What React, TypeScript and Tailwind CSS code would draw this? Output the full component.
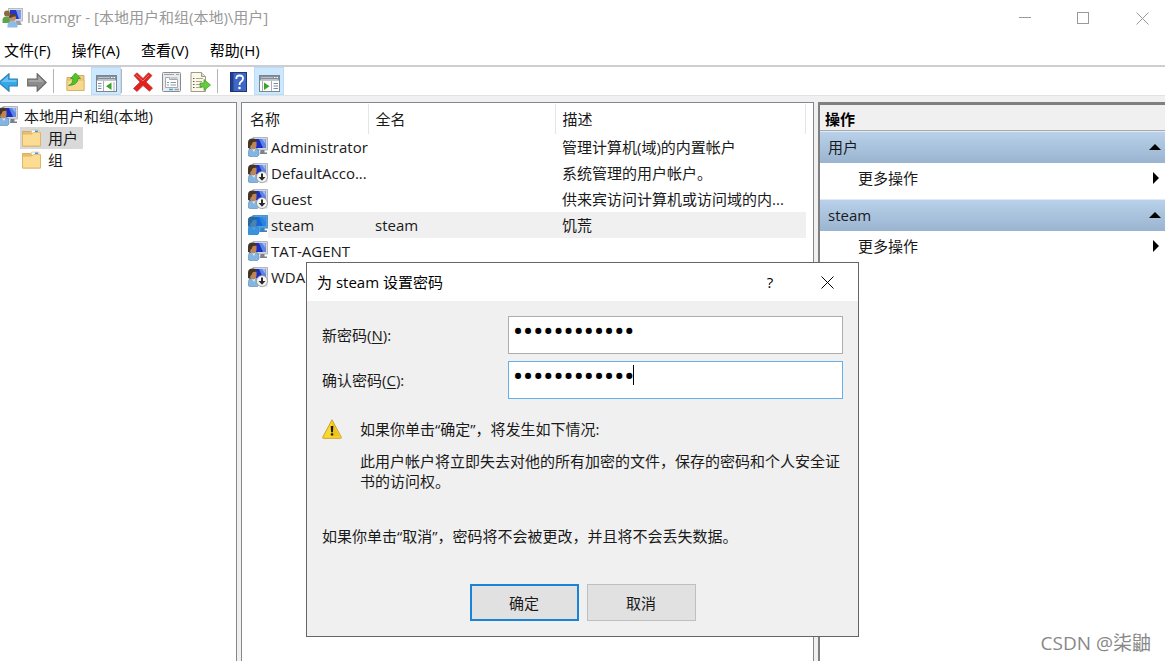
import type { ReactNode } from 'react'

type UserState = 'normal' | 'disabled' | 'selected'

interface User {
  name: string
  fullName?: string
  description?: string
  state: UserState
}

const users: User[] = [
  { name: 'Administrator', description: '管理计算机(域)的内置帐户', state: 'normal' },
  { name: 'DefaultAcco...', description: '系统管理的用户帐户。', state: 'disabled' },
  { name: 'Guest', description: '供来宾访问计算机或访问域的内...', state: 'disabled' },
  { name: 'steam', fullName: 'steam', description: '饥荒', state: 'selected' },
  { name: 'TAT-AGENT', state: 'normal' },
  { name: 'WDA', state: 'disabled' },
]

const menus = ['文件(F)', '操作(A)', '查看(V)', '帮助(H)']

function UserIcon({ state = 'normal' }: { state?: UserState }) {
  return (
    <svg width="20" height="20" viewBox="0 0 20 20" className="block shrink-0">
      <path d="M5 .5h14.500v12.500H5z" fill="#d5d6da" stroke="#b4b6bc" />
      <path d="M6.500 2h11v9h-11z" fill="#1a2fc0" />
      <path d="M11 2h6.500v9H15z" fill="#5c83e6" />
      <path d="M14 2h3.500v5z" fill="#9db8f5" />
      <path d="M12.500 13h4v2.500H19V17h-7z" fill="#7f8189" />
      <path d="M.5 19v-4.500q0-3 3-3.500h3.500q4 .5 4 4v3l-1.500 1.500H2z" fill="#84b5e0" stroke="#5485b5" strokeWidth="0.600" />
      <path d="M3.500 11l2.500 4 1.500-4z" fill="#eaf2f8" />
      <path d="M2 4h6.500v5q-.5 3.500-3 3.500T2 9z" fill="#bf8554" />
      <path d="M0 11V5.500Q0 1.500 4.500 1.500q4 0 4.500 3.500-3-.5-4.500.5Q4 8 2.500 8.500V12z" fill="#453628" />
      {state === 'disabled' && (
        <g>
          <path d="M19.500 10v9.500H11" fill="#d5d6da" />
          <circle cx="14" cy="14" r="5.500" fill="#f7f7f7" stroke="#8f8f8f" strokeWidth="0.800" />
          <path d="M13 10.500h2v3.500h2.500L14 17.700 10.500 14H13z" fill="#2b2b2b" />
        </g>
      )}
      {state === 'selected' && (
        <path
          d="M4.500 0H20v13.500h-3.500v2H19V17h-8v2l-2 1H0V5q0-3.500 4.500-3.500z"
          fill="#1683dc"
          fillOpacity="0.680"
        />
      )}
    </svg>
  )
}

function GroupIcon() {
  return (
    <svg width="21" height="20" viewBox="0 0 21 20" className="block shrink-0">
      <rect x="6.500" y="0.500" width="14" height="12.500" fill="#dedfe3" stroke="#b9bbc2" />
      <rect x="8" y="2" width="11" height="9" fill="#2138c9" />
      <path d="M14 2h5v9h-2z" fill="#7d9bee" />
      <path d="M14 13h4l2 4h-6z" fill="#9c9ea6" />
      <circle cx="5" cy="5.500" r="3" fill="#8d6a43" />
      <path d="M0.500 15v-3q0-3.500 4-3.500t4 3.500v3z" fill="#63a347" />
      <circle cx="10.500" cy="9.500" r="3.500" fill="#c88d5e" />
      <path d="M7 9.500q0-4 3.500-4t3.500 3q-4-.500-5 1.500z" fill="#5a4030" />
      <path d="M5.500 19.500v-2q0-4.500 5-4.500t5 4.500v2z" fill="#8cbde6" />
    </svg>
  )
}

function FolderIcon() {
  return (
    <svg width="19" height="18" viewBox="0 0 19 18" className="block shrink-0">
      <path d="M.5 2.500h8l2 2h8V17H.5z" fill="#e9bf6c" stroke="#cfa252" strokeWidth="0.800" />
      <path d="M9.500 1h7.500v4H9.500z" fill="#f4f7fa" stroke="#c8b07a" strokeWidth="0.500" />
      <path d="M13 1.500h3v1.500h-3z" fill="#3d9be0" />
      <path d="M.5 5h9.500l1.500-1.500h7V17H.5z" fill="#fbdc92" stroke="#dcb263" strokeWidth="0.800" />
    </svg>
  )
}

function ArrowIcon({ forward = false }: { forward?: boolean }) {
  return forward ? (
    <svg width="20" height="19" viewBox="0 0 20 19">
      <path d="M.7 6h9.500V.8l9 8.700-9 8.700V13H.7z" fill="#8c8c8c" stroke="#686868" strokeWidth="1.200" />
      <path d="M1.500 7h9.700V3l6 6H1.500z" fill="#a5a5a5" />
    </svg>
  ) : (
    <svg width="18" height="19" viewBox="0 0 18 19">
      <path d="M17.300 6H9V.8L-1 9.500l10 8.700V13h8.300z" fill="#35a8e8" stroke="#2f80b8" strokeWidth="1.200" />
      <path d="M16.500 7H8V3L1 9h15.500z" fill="#66c3f2" />
    </svg>
  )
}

function FolderUpIcon() {
  return (
    <svg width="19" height="20" viewBox="0 0 19 20">
      <path d="M1 5.500h9l2-2h6v15H1z" fill="#f2cd7c" stroke="#c99e4a" strokeWidth="0.800" />
      <path d="M1 8h17v10.500H1z" fill="#f6d88e" stroke="#d2a857" strokeWidth="0.600" />
      <path d="M2.500 13.500Q7 12 7 6.500H4.500l5-5.500 5 5.500H12q0 6.500-9.500 7z" fill="#4fc52b" stroke="#2f8f18" strokeWidth="0.700" />
    </svg>
  )
}

function PaneIcon({ right = false }: { right?: boolean }) {
  return (
    <svg width="21" height="17" viewBox="0 0 21 17">
      <rect x="0.500" y="0.500" width="20" height="16" fill="#fff" stroke="#7d8590" />
      <rect x="1" y="1" width="19" height="4.500" fill="#858d98" />
      <path d="M2 2.500h12M2 4.500h17" stroke="#c9ced5" strokeWidth="0.800" />
      <path d="M15 2.500h1.500M17.500 2.500H19" stroke="#fff" />
      {right ? (
        <g>
          <path d="M12.500 6v10M3.500 6v10" stroke="#a6adb6" />
          <path d="M14.500 8.500H19M14.500 11H19M14.500 13.500H19" stroke="#718db0" />
          <path d="M5 7.500l5.500 3.700L5 14.900z" fill="#3aa328" />
        </g>
      ) : (
        <g>
          <path d="M7.500 6v10M18 7v9" stroke="#a6adb6" />
          <path d="M2 8.500h3.500M2 11h3.500M2 13.500h3.500" stroke="#718db0" />
          <path d="M15.500 7.500L10 11.200l5.500 3.700z" fill="#3aa328" />
        </g>
      )}
    </svg>
  )
}

function DeleteIcon() {
  return (
    <svg width="20" height="20" viewBox="0 0 20 20">
      <path
        d="M1 3.500L4 .8l6 5.700L15.500.8 19 3.500l-6 6.500 6.500 6-3 3.200L10 13.500l-6 6L.5 16.500 7 10z"
        fill="#e0231f"
        stroke="#c23a35"
        strokeWidth="0.800"
      />
      <path d="M3 3l7 6 6-6" fill="none" stroke="#f2726c" />
    </svg>
  )
}

function PropertiesIcon() {
  return (
    <svg width="19" height="20" viewBox="0 0 19 20">
      <rect x="0.500" y="0.500" width="18" height="19" rx="1" fill="#e9ebed" stroke="#878c92" />
      <path d="M2 2.500h10M14 2.500h3" stroke="#9ca1a8" />
      <path d="M3.500 5.500h4v2h8v8h-12z" fill="#fff" stroke="#a4a9b0" />
      <path d="M8.500 6h7" stroke="#a4a9b0" />
      <path d="M5 10.500h2M8.500 10.500H14M5 13h2M8.500 13H14" stroke="#8d97a3" />
      <path d="M7 17.500h4" stroke="#25b3ea" strokeWidth="1.500" />
      <path d="M12.500 17.500H17" stroke="#9ca1a8" strokeWidth="1.500" />
    </svg>
  )
}

function ExportIcon() {
  return (
    <svg width="21" height="20" viewBox="0 0 21 20">
      <path d="M1 .5h10.500l4 4v15H1z" fill="#fdf9e8" stroke="#a09b86" />
      <path d="M11.500.5v4h4" fill="#e2dcc3" stroke="#a09b86" />
      <path d="M3 6.500h1.500M3 9.500h1.500M3 12.500h1.500M3 15.500h1.500" stroke="#555" />
      <path d="M6 6.500h7M6 9.500h6M6 12.500h4M6 15.500h6" stroke="#a9a794" />
      <path d="M10 11h4V7.500l6.500 5.500-6.500 5.500V15h-4z" fill="#66cc3e" stroke="#3c9a22" strokeWidth="0.700" />
    </svg>
  )
}

function HelpIcon() {
  return (
    <svg width="17" height="20" viewBox="0 0 17 20">
      <rect x="0.500" y="0.500" width="16" height="19" fill="#3f68c6" stroke="#1d3675" />
      <path d="M1 1h2.500v18H1z" fill="#203f91" />
      <path d="M6.300 7q0-3.500 3.400-3.500T13 6.500q0 1.800-1.800 2.900T9.500 13" fill="none" stroke="#fff" strokeWidth="1.800" />
      <circle cx="9.500" cy="16" r="1.300" fill="#fff" />
    </svg>
  )
}

function WarningIcon() {
  return (
    <svg width="20" height="20" viewBox="0 0 20 20" className="block shrink-0">
      <path d="M10 .8L19.400 18.500q0 .8-.8.800H1.400q-.8 0-.8-.8z" fill="#fbd92c" stroke="#c7981b" strokeWidth="0.900" />
      <path d="M10 2.500L17.500 17.500H10z" fill="#f0c21c" />
      <path d="M8.700 7h2.600l-.4 6.300H9.100z" fill="#1a1a1a" />
      <rect x="8.800" y="14.300" width="2.400" height="2.200" fill="#1a1a1a" />
    </svg>
  )
}

function CloseIcon() {
  return (
    <svg width="13" height="13" viewBox="0 0 13 13" stroke="currentColor">
      <path d="M.5.5l12 12M12.500.5l-12 12" />
    </svg>
  )
}

function ToolButton({ label, active, children }: { label: string; active?: boolean; children: ReactNode }) {
  return (
    <button
      type="button"
      aria-label={label}
      className={
        active
          ? 'flex h-7 w-[30px] items-center justify-center border border-[#b9dcf8] bg-[#cce8ff] pt-1'
          : 'flex h-7 items-center justify-center pt-0.5'
      }
    >
      {children}
    </button>
  )
}

function Separator() {
  return <div className="h-6 w-px bg-[#b4b4b4]" />
}

function TitleBar() {
  return (
    <header className="flex h-9 items-center pl-0.5 text-[#999999]">
      <GroupIcon />
      <h1 className="ml-1 flex-1 pb-0.5">lusrmgr - [本地用户和组(本地)\用户]</h1>
      <div className="flex pr-[-6px]">
        <button type="button" aria-label="最小化" className="flex h-9 w-[58px] items-center justify-center">
          <svg width="12" height="12" viewBox="0 0 12 12" stroke="currentColor">
            <path d="M0 5.500h12" />
          </svg>
        </button>
        <button type="button" aria-label="最大化" className="flex h-9 w-[58px] items-center justify-center">
          <svg width="12" height="12" viewBox="0 0 12 12" fill="none" stroke="currentColor">
            <rect x="0.500" y="0.500" width="11" height="11" />
          </svg>
        </button>
        <button type="button" aria-label="关闭" className="flex h-9 w-[53px] items-center pl-6">
          <CloseIcon />
        </button>
      </div>
    </header>
  )
}

function Toolbar() {
  return (
    <div className="flex h-[30px] items-center border-t-2 border-[#cdcdd2]">
      <ToolButton label="后退"><ArrowIcon /></ToolButton>
      <div className="w-[9px]" />
      <ToolButton label="前进"><ArrowIcon forward /></ToolButton>
      <div className="w-1.5" />
      <Separator />
      <div className="w-3" />
      <ToolButton label="上一级"><FolderUpIcon /></ToolButton>
      <div className="w-1.5" />
      <ToolButton label="显示/隐藏控制台树" active><PaneIcon /></ToolButton>
      <Separator />
      <div className="w-[11px]" />
      <ToolButton label="删除"><DeleteIcon /></ToolButton>
      <div className="w-[9px]" />
      <ToolButton label="属性"><PropertiesIcon /></ToolButton>
      <div className="w-[9px]" />
      <ToolButton label="导出列表"><ExportIcon /></ToolButton>
      <div className="w-1.5" />
      <Separator />
      <div className="w-3" />
      <ToolButton label="帮助"><HelpIcon /></ToolButton>
      <div className="w-[7px]" />
      <ToolButton label="显示/隐藏操作窗格" active><PaneIcon right /></ToolButton>
    </div>
  )
}

function Tree() {
  return (
    <nav className="w-[237px] shrink-0 overflow-hidden border-t border-r border-[#828790] bg-white pt-0.5">
      <div className="flex h-[22px] items-center">
        <div className="w-[18px] shrink-0 overflow-hidden">
          <div className="-ml-0.5"><UserIcon /></div>
        </div>
        <span className="ml-1.5">本地用户和组(本地)</span>
      </div>
      <ul className="pl-5">
        <li className="flex h-[22px] w-[63px] items-center bg-[#d9d9d9] pl-0.5">
          <FolderIcon />
          <span className="ml-[7px]">用户</span>
        </li>
        <li className="flex h-[22px] items-center pl-0.5">
          <FolderIcon />
          <span className="ml-[7px]">组</span>
        </li>
      </ul>
    </nav>
  )
}

function UserList() {
  return (
    <main className="min-w-0 flex-1 border border-b-0 border-[#828790] bg-white pr-[7px] pt-px">
      <table className="w-full table-fixed border-collapse">
        <thead>
          <tr className="h-[30px] text-left">
            <th className="w-[126px] border-r border-[#e5e5e5] pl-2 font-normal">名称</th>
            <th className="w-[187px] border-r border-[#e5e5e5] pl-[7px] font-normal">全名</th>
            <th className="border-r border-[#e5e5e5] pl-[7px] font-normal">描述</th>
          </tr>
        </thead>
        <tbody>
          {users.map((user) => (
            <tr key={user.name} className={user.state === 'selected' ? 'h-[26px] bg-[#f0f0f0]' : 'h-[26px]'}>
              <td className="p-0">
                <div className="flex items-center whitespace-nowrap">
                  <div className="bg-white py-[3px] pl-1.5"><UserIcon state={user.state} /></div>
                  <span className="ml-[3px]">{user.name}</span>
                </div>
              </td>
              <td className="py-0 pl-[7px]">{user.fullName}</td>
              <td className="truncate py-0 pl-[7px]">{user.description}</td>
            </tr>
          ))}
        </tbody>
      </table>
    </main>
  )
}

function ActionGroup({ title }: { title: string }) {
  return (
    <section>
      <h3 className="flex h-8 items-center justify-between border-t border-[#dfeaf5] bg-linear-to-b from-[#b9d1ea] to-[#9ab4d0] pr-1 pb-px pl-2">
        {title}
        <svg width="12" height="6" viewBox="0 0 12 6">
          <path d="M0 6L6 0l6 6z" />
        </svg>
      </h3>
      <button type="button" className="mb-1.5 flex h-[30px] w-full items-center justify-between pr-1.5 pl-[38px]">
        更多操作
        <svg width="6" height="12" viewBox="0 0 6 12">
          <path d="M0 0l6 6-6 6z" />
        </svg>
      </button>
    </section>
  )
}

function Actions() {
  return (
    <aside className="w-[347px] shrink-0 border-t-3 border-l-2 border-[#808080] bg-white">
      <h2 className="h-[26px] border-b border-[#a9a9a9] bg-[#f0f0f0] pl-[5px] leading-7 font-bold text-black">操作</h2>
      <ActionGroup title="用户" />
      <ActionGroup title="steam" />
    </aside>
  )
}

function PasswordDialog() {
  return (
    <div
      role="dialog"
      aria-labelledby="dialog-title"
      className="absolute top-[262px] left-[306px] w-[553px] border border-[#666666] bg-[#f0f0f0]"
    >
      <div className="flex h-[38px] items-center bg-white pr-0.5 pl-2.5">
        <h2 id="dialog-title" className="flex-1 text-black">为 steam 设置密码</h2>
        <button type="button" aria-label="帮助" className="h-full w-14 text-black">?</button>
        <button type="button" aria-label="关闭" className="flex h-full w-[58px] items-center justify-center text-black">
          <CloseIcon />
        </button>
      </div>
      <form className="px-[15px] pt-[15px] pb-[15px]">
        <div className="flex items-center">
          <label htmlFor="new-password" className="w-[186px]">
            新密码(<u className="underline-offset-2">N</u>):
          </label>
          <input
            id="new-password"
            type="password"
            defaultValue="dontstarve12"
            className="h-[38px] min-w-0 flex-1 border border-[#adadad] bg-white px-1 pb-2 font-[Roboto] text-3xl text-black outline-none"
          />
        </div>
        <div className="relative mt-[7px] flex items-center">
          <label htmlFor="confirm-password" className="w-[186px]">
            确认密码(<u className="underline-offset-2">C</u>):
          </label>
          <input
            id="confirm-password"
            type="password"
            defaultValue="dontstarve12"
            className="h-[38px] min-w-0 flex-1 border border-[#66afe9] bg-white px-1 pb-2 font-[Roboto] text-3xl text-black outline-none"
          />
          <div className="absolute top-1 left-[311px] h-5 w-px bg-black" />
        </div>
        <div className="mt-5 flex items-start gap-[18px]">
          <WarningIcon />
          <div>
            <p>如果你单击“确定”，将发生如下情况:</p>
            <p className="mt-3">此用户帐户将立即失去对他的所有加密的文件，保存的密码和个人安全证书的访问权。</p>
          </div>
        </div>
        <p className="mt-[35px]">如果你单击“取消”，密码将不会被更改，并且将不会丢失数据。</p>
        <div className="mt-[38px] flex justify-center gap-2">
          <button type="button" className="h-[37px] w-[109px] border-2 border-[#1883d7] bg-[#e1e1e1]">确定</button>
          <button type="button" className="h-[37px] w-[109px] border border-[#bfbfbf] bg-[#e1e1e1]">取消</button>
        </div>
      </form>
    </div>
  )
}

export default function App() {
  return (
    <div className="relative flex min-h-screen flex-col bg-white font-['Open_Sans','Noto_Sans_CJK_SC',sans-serif] text-[15px] leading-5 text-[#1a1a1a]">
      <TitleBar />
      <nav className="flex h-[29px] items-center gap-[21px] pb-px pl-1 text-black">
        {menus.map((menu) => (
          <button key={menu} type="button">{menu}</button>
        ))}
      </nav>
      <Toolbar />
      <div className="flex flex-1 gap-1 border-t border-[#e2e2e2] bg-[#f0f0f0] pt-1.5">
        <Tree />
        <UserList />
        <Actions />
      </div>
      <PasswordDialog />
      <div className="absolute right-3.5 bottom-2 text-[19px] leading-5 text-[#888888]">CSDN @柒鼬</div>
    </div>
  )
}
